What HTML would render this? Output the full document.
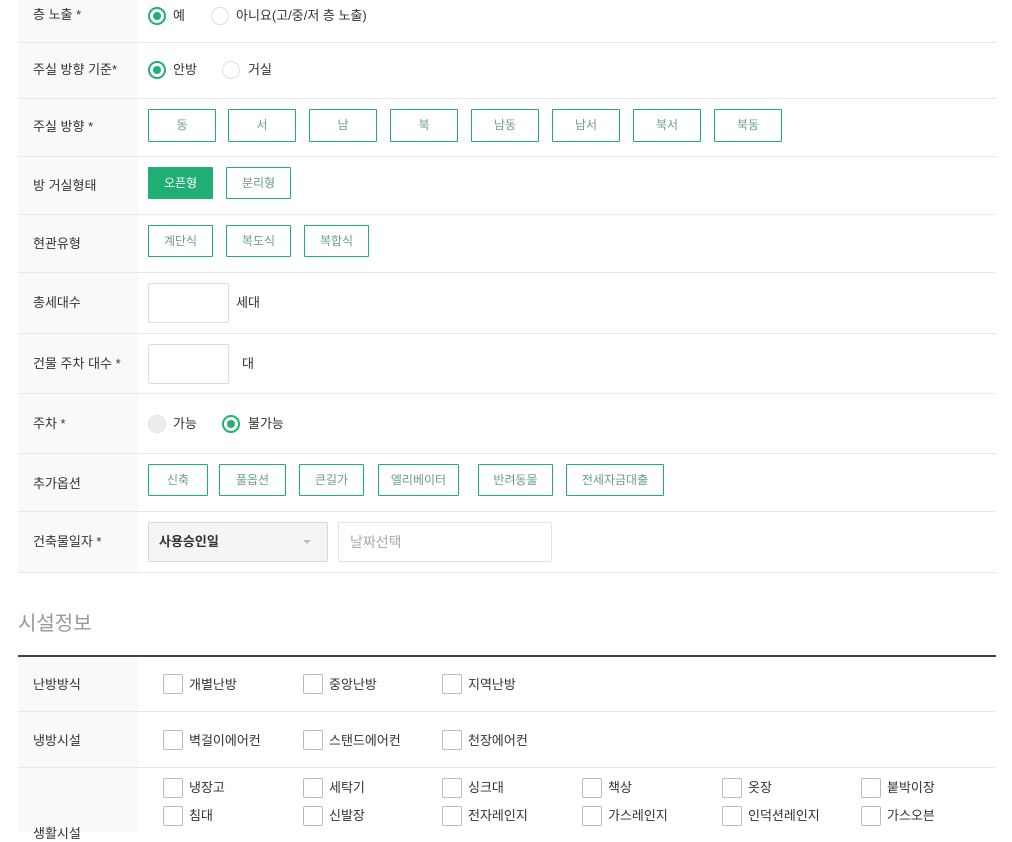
<!DOCTYPE html>
<html><head><meta charset="utf-8">
<style>
*{box-sizing:border-box;margin:0;padding:0}
body{width:1012px;height:832px;overflow:hidden;background:#fff;font-family:"Liberation Sans","Noto Sans CJK KR",sans-serif;font-size:13px;color:#333;position:relative}
.a{position:absolute}
.lab{position:absolute;left:18px;width:120px;background:#f9f9f9}
.line{position:absolute;left:18px;width:978px;height:1px;background:#e8e8e8}
.t{position:absolute;line-height:16px;white-space:nowrap}
.rad{position:absolute;width:18px;height:18px;border-radius:50%;border:1px solid #e0e0e0;background:#fff}
.rad.on{border:2px solid #20ae74}
.rad.on::after{content:"";position:absolute;left:3px;top:3px;width:8px;height:8px;border-radius:50%;background:#20ae74}
.rad.dis{background:#eee;border-color:#e3e3e3}
.btn{position:absolute;border:1px solid #20ae74;color:#6a9e86;font-size:12px;text-align:center;background:#fff;border-radius:1px}
.btn.on{background:#20ae74;color:#fff}
.inp{position:absolute;border:1px solid #ddd;border-radius:2px;background:#fff}
.cb{position:absolute;width:20px;height:20px;border:1px solid #bbb;border-radius:2px;background:#fff}
</style></head><body>
<div class="lab" style="top:0;height:42px"></div>
<div class="lab" style="top:43px;height:55px"></div>
<div class="lab" style="top:99px;height:57px"></div>
<div class="lab" style="top:157px;height:57px"></div>
<div class="lab" style="top:215px;height:57px"></div>
<div class="lab" style="top:273px;height:60px"></div>
<div class="lab" style="top:334px;height:59px"></div>
<div class="lab" style="top:394px;height:59px"></div>
<div class="lab" style="top:454px;height:57px"></div>
<div class="lab" style="top:512px;height:60px"></div>
<div class="line" style="top:42px"></div>
<div class="line" style="top:98px"></div>
<div class="line" style="top:156px"></div>
<div class="line" style="top:214px"></div>
<div class="line" style="top:272px"></div>
<div class="line" style="top:333px"></div>
<div class="line" style="top:393px"></div>
<div class="line" style="top:453px"></div>
<div class="line" style="top:511px"></div>
<div class="line" style="top:572px"></div>

<div class="t" style="left:33px;top:7px">층 노출 *</div>
<div class="rad on" style="left:148px;top:7px"></div><div class="t" style="left:173px;top:8px">예</div>
<div class="rad" style="left:211px;top:7px"></div><div class="t" style="left:236px;top:8px">아니요(고/중/저 층 노출)</div>

<div class="t" style="left:33px;top:62px">주실 방향 기준*</div>
<div class="rad on" style="left:148px;top:61px"></div><div class="t" style="left:173px;top:62px">안방</div>
<div class="rad" style="left:222px;top:61px"></div><div class="t" style="left:248px;top:62px">거실</div>

<div class="t" style="left:33px;top:119px">주실 방향 *</div>
<div class="btn" style="left:148px;top:109px;width:68px;height:33px;line-height:31px">동</div>
<div class="btn" style="left:228px;top:109px;width:68px;height:33px;line-height:31px">서</div>
<div class="btn" style="left:309px;top:109px;width:68px;height:33px;line-height:31px">남</div>
<div class="btn" style="left:390px;top:109px;width:68px;height:33px;line-height:31px">북</div>
<div class="btn" style="left:471px;top:109px;width:68px;height:33px;line-height:31px">남동</div>
<div class="btn" style="left:552px;top:109px;width:68px;height:33px;line-height:31px">남서</div>
<div class="btn" style="left:633px;top:109px;width:68px;height:33px;line-height:31px">북서</div>
<div class="btn" style="left:714px;top:109px;width:68px;height:33px;line-height:31px">북동</div>

<div class="t" style="left:33px;top:178px">방 거실형태</div>
<div class="btn on" style="left:148px;top:167px;width:65px;height:32px;line-height:30px">오픈형</div>
<div class="btn" style="left:226px;top:167px;width:65px;height:32px;line-height:30px">분리형</div>

<div class="t" style="left:33px;top:236px">현관유형</div>
<div class="btn" style="left:148px;top:225px;width:65px;height:32px;line-height:30px">계단식</div>
<div class="btn" style="left:226px;top:225px;width:65px;height:32px;line-height:30px">복도식</div>
<div class="btn" style="left:304px;top:225px;width:65px;height:32px;line-height:30px">복합식</div>

<div class="t" style="left:33px;top:295px">총세대수</div>
<div class="inp" style="left:148px;top:283px;width:81px;height:40px"></div>
<div class="t" style="left:236px;top:295px">세대</div>

<div class="t" style="left:33px;top:356px">건물 주차 대수 *</div>
<div class="inp" style="left:148px;top:344px;width:81px;height:40px"></div>
<div class="t" style="left:242px;top:356px">대</div>

<div class="t" style="left:33px;top:416px">주차 *</div>
<div class="rad dis" style="left:148px;top:415px"></div><div class="t" style="left:173px;top:416px">가능</div>
<div class="rad on" style="left:222px;top:415px"></div><div class="t" style="left:248px;top:416px">불가능</div>

<div class="t" style="left:33px;top:476px">추가옵션</div>
<div class="btn" style="left:148px;top:464px;width:60px;height:32px;line-height:30px">신축</div>
<div class="btn" style="left:219px;top:464px;width:67px;height:32px;line-height:30px">풀옵션</div>
<div class="btn" style="left:299px;top:464px;width:65px;height:32px;line-height:30px">큰길가</div>
<div class="btn" style="left:378px;top:464px;width:81px;height:32px;line-height:30px">엘리베이터</div>
<div class="btn" style="left:478px;top:464px;width:75px;height:32px;line-height:30px">반려동물</div>
<div class="btn" style="left:566px;top:464px;width:98px;height:32px;line-height:30px">전세자금대출</div>

<div class="t" style="left:33px;top:534px">건축물일자 *</div>
<div class="inp" style="left:148px;top:522px;width:180px;height:40px;background:#f5f5f5;border-color:#d8d8d8"></div>
<div class="t" style="left:159px;top:534px;font-weight:bold;color:#333">사용승인일</div>
<div class="a" style="left:303px;top:540px;width:0;height:0;border-left:4px solid transparent;border-right:4px solid transparent;border-top:4px solid #bbb"></div>
<div class="inp" style="left:338px;top:522px;width:214px;height:40px;border-color:#e3e3e3"></div>
<div class="t" style="left:350px;top:534px;color:#aaa;font-size:14px">날짜선택</div>

<div class="t" style="left:18px;top:612px;font-size:20px;line-height:24px;color:#999">시설정보</div>
<div class="a" style="left:18px;top:655px;width:978px;height:2px;background:#444"></div>

<div class="lab" style="top:657px;height:54px"></div>
<div class="lab" style="top:712px;height:55px"></div>
<div class="lab" style="top:768px;height:64px"></div>
<div class="line" style="top:711px"></div>
<div class="line" style="top:767px"></div>

<div class="t" style="left:33px;top:677px">난방방식</div>
<div class="cb" style="left:163px;top:674px"></div><div class="t" style="left:189px;top:677px">개별난방</div>
<div class="cb" style="left:303px;top:674px"></div><div class="t" style="left:329px;top:677px">중앙난방</div>
<div class="cb" style="left:442px;top:674px"></div><div class="t" style="left:468px;top:677px">지역난방</div>

<div class="t" style="left:33px;top:733px">냉방시설</div>
<div class="cb" style="left:163px;top:730px"></div><div class="t" style="left:189px;top:733px">벽걸이에어컨</div>
<div class="cb" style="left:303px;top:730px"></div><div class="t" style="left:329px;top:733px">스탠드에어컨</div>
<div class="cb" style="left:442px;top:730px"></div><div class="t" style="left:468px;top:733px">천장에어컨</div>

<div class="t" style="left:33px;top:826px">생활시설</div>
<div class="cb" style="left:163px;top:778px"></div><div class="t" style="left:189px;top:780px">냉장고</div>
<div class="cb" style="left:303px;top:778px"></div><div class="t" style="left:329px;top:780px">세탁기</div>
<div class="cb" style="left:442px;top:778px"></div><div class="t" style="left:468px;top:780px">싱크대</div>
<div class="cb" style="left:582px;top:778px"></div><div class="t" style="left:608px;top:780px">책상</div>
<div class="cb" style="left:722px;top:778px"></div><div class="t" style="left:748px;top:780px">옷장</div>
<div class="cb" style="left:861px;top:778px"></div><div class="t" style="left:887px;top:780px">붙박이장</div>
<div class="cb" style="left:163px;top:806px"></div><div class="t" style="left:189px;top:808px">침대</div>
<div class="cb" style="left:303px;top:806px"></div><div class="t" style="left:329px;top:808px">신발장</div>
<div class="cb" style="left:442px;top:806px"></div><div class="t" style="left:468px;top:808px">전자레인지</div>
<div class="cb" style="left:582px;top:806px"></div><div class="t" style="left:608px;top:808px">가스레인지</div>
<div class="cb" style="left:722px;top:806px"></div><div class="t" style="left:748px;top:808px">인덕션레인지</div>
<div class="cb" style="left:861px;top:806px"></div><div class="t" style="left:887px;top:808px">가스오븐</div>
</body></html>
